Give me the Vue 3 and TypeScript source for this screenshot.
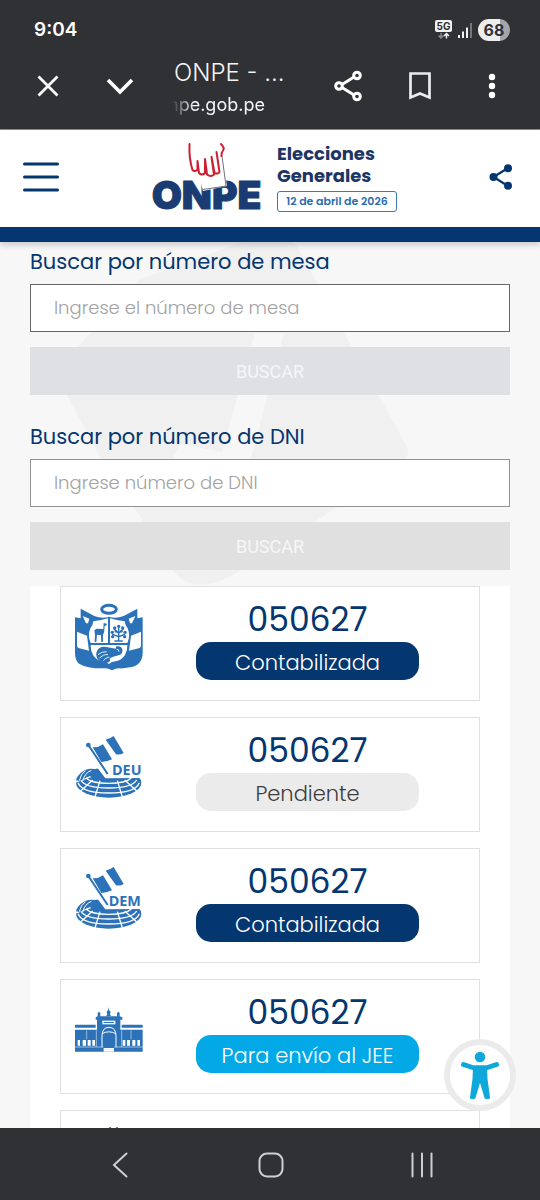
<script setup lang="ts">
import { ref } from 'vue'

type IconName = 'escudo' | 'deu' | 'dem' | 'palacio' | 'siguiente'
type Status = 'done' | 'pending' | 'jee'

interface Acta {
  icon: IconName
  numero?: string
  label?: string
  status?: Status
}

const mesa = ref('')
const dni = ref('')

const actas: Acta[] = [
  { icon: 'escudo', numero: '050627', label: 'Contabilizada', status: 'done' },
  { icon: 'deu', numero: '050627', label: 'Pendiente', status: 'pending' },
  { icon: 'dem', numero: '050627', label: 'Contabilizada', status: 'done' },
  { icon: 'palacio', numero: '050627', label: 'Para envío al JEE', status: 'jee' },
  { icon: 'siguiente' },
]
</script>

<template>
  <div class="phone">
    <div class="status">
      <span class="time">9:04</span>
      <div class="indicators">
        <svg width="17" height="20" viewBox="0 0 17 20">
          <rect x="0" y="0" width="17" height="12" rx="2" fill="#f2f2f3" />
          <text x="8.5" y="9.5" class="net" text-anchor="middle">5G</text>
          <path d="M6 13v5M3.500 15.500L6 18l2.500-2.500" stroke="#8b8b8e" stroke-width="1.500" fill="none" />
          <path d="M11.500 18.500v-5M9 16l2.500-2.500L14 16" stroke="#f2f2f3" stroke-width="1.500" fill="none" />
        </svg>
        <svg width="14" height="15" viewBox="0 0 14 15">
          <path d="M1 12v3M5 8.500V15M9 4.500V15" stroke="#f2f2f3" stroke-width="2" />
          <path d="M13 0v15" stroke="#77777a" stroke-width="2" />
        </svg>
        <span class="battery">68</span>
      </div>
    </div>

    <div class="toolbar">
      <button class="tool" aria-label="Cerrar">
        <svg width="22" height="22" viewBox="0 0 22 22"><path d="M1.500 1.500l19 19M20.500 1.500l-19 19" stroke="#fff" stroke-width="2.800" /></svg>
      </button>
      <button class="tool" aria-label="Minimizar">
        <svg width="28" height="18" viewBox="0 0 28 18"><path d="M2 3l12 12L26 3" stroke="#fff" stroke-width="3.600" fill="none" /></svg>
      </button>
      <div class="page">
        <div class="title">ONPE - ...</div>
        <div class="domain">npe.gob.pe</div>
      </div>
      <button class="tool" aria-label="Compartir página">
        <svg width="28" height="32" viewBox="0 0 28 32" fill="none" stroke="#fff" stroke-width="3">
          <path d="M8 14.500L20 7M8 17.500L20 25" />
          <circle cx="5" cy="16" r="3.300" /><circle cx="23" cy="5.500" r="3.300" /><circle cx="23" cy="26.500" r="3.300" />
        </svg>
      </button>
      <button class="tool" aria-label="Guardar">
        <svg width="22" height="28" viewBox="0 0 22 28"><path d="M1.500 1.500h19v24L11 21.500l-9.500 4z" stroke="#ececee" stroke-width="2.700" fill="none" /></svg>
      </button>
      <button class="tool" aria-label="Más opciones">
        <svg width="8" height="26" viewBox="0 0 8 26" fill="#fff"><circle cx="4" cy="4" r="3.200" /><circle cx="4" cy="13" r="3.200" /><circle cx="4" cy="22" r="3.200" /></svg>
      </button>
    </div>

    <header class="site-header">
      <button class="plain" aria-label="Menú">
        <svg width="36" height="30" viewBox="0 0 36 30"><path d="M1.500 2h33M1.500 15h33M1.500 28h33" stroke="#04366f" stroke-width="3" stroke-linecap="round" /></svg>
      </button>
      <a href="#" class="brand">
        <svg class="logo" width="112" height="70" viewBox="0 0 112 70">
          <text x="55.500" y="67" class="onpe" text-anchor="middle">ONPE</text>
          <path d="M47 30L71 12l5 32-24 5z" fill="#fff" />
          <path d="M71 14l4 30-23 3.500" fill="none" stroke="#6c7278" stroke-width="1" />
          <g fill="none" stroke="#cc1f32" stroke-width="2" stroke-linecap="round" stroke-linejoin="round">
            <path d="M38.500 2C38 12 39 20 41.500 28q2 2 5 0V19L48 31q3 3 6 0V17l2 15.500q4 3 7 0L60.500 15l3 16q4 1.500 5-1L65.500 10" />
            <path d="M70 2q4 4 2 6.500T70.500 14" />
          </g>
        </svg>
        <span class="election">
          <strong class="name">
            <span>Elecciones</span>
            <span>Generales</span>
          </strong>
          <span class="date">12 de abril de 2026</span>
        </span>
      </a>
      <button class="plain" aria-label="Compartir">
        <svg width="24" height="26" viewBox="0 0 24 26" fill="#04366f">
          <path d="M4.500 13L19 4M4.500 13L19 22" stroke="#04366f" stroke-width="2.200" />
          <circle cx="4.500" cy="13" r="4" /><circle cx="19" cy="4.300" r="4" /><circle cx="19" cy="21.700" r="4" />
        </svg>
      </button>
    </header>

    <main class="content">
      <svg class="watermark" width="352" height="344" viewBox="60 242 352 344">
        <path d="M242 242h48q5 0 8 6l19 35 27 50 63 114q4 8-5 14l-65 46-96 63q-20 13-34 14-20 3-32-11l-41-66-34-50-38-71q-8-12 6-28l70-78z" fill="#f0f0f0" />
        <path d="M255 333h29l-33 126h-79l9-15 41 8z" fill="#f7f7f7" />
      </svg>

      <form class="search" @submit.prevent>
        <label for="mesa">Buscar por número de mesa</label>
        <input id="mesa" v-model="mesa" class="field strong" type="text" placeholder="Ingrese el número de mesa" />
        <button class="submit cool" type="submit">BUSCAR</button>
      </form>
      <form class="search" @submit.prevent>
        <label for="dni">Buscar por número de DNI</label>
        <input id="dni" v-model="dni" class="field" type="text" placeholder="Ingrese número de DNI" />
        <button class="submit" type="submit">BUSCAR</button>
      </form>

      <section class="results">
        <article v-for="(acta, i) in actas" :key="i" class="card">
          <svg v-if="acta.icon === 'escudo'" class="icon" viewBox="45 54 204 204">
            <ellipse cx="147" cy="73" rx="22" ry="12" fill="none" stroke="#2b72b9" stroke-width="9" />
            <path d="M62 71l41 22q24 9 44 2 20 7 44-2l41-22v29l16-3v107q-1 37-38 43-20 4-32 3-10-1-20 5h-4q-9-6-20-5-52 1-77-14-12-10-12-32V97l17 3z" fill="#2b72b9" />
            <path d="M68 93l20 8-4 14h-6zM226 93l-20 8 4 14h6zM51 140l30 12 6 45-32-8-4-5zM243 140l-30 12-6 45 32-8 4-5z" fill="#fff" />
            <path d="M100 109q24-3 44-9v74H92q-10-22-1-44 8-10 9-21zM194 109q-24-3-44-9v74h52q10-22 1-44-8-10-9-21zM92 180h110q1 17-7 30-10 16-28 19-13 1-20 8-7-7-20-8-18-3-28-19-8-13-7-30z" fill="#fff" />
            <path d="M131 114l9 2v5l-6 2-2 21-3 3v24h-5l-1-20-12-2-2 22h-5l1-22-2-13 7-5 20 1z" fill="#2b72b9" />
            <g stroke="#2b72b9" stroke-width="4" stroke-linecap="round"><path d="M176 168v-43M163 133l13 12 13-12M158 148l18 7 18-7M165 168h22" fill="none" /></g>
            <g fill="#2b72b9">
              <circle cx="176" cy="124" r="5" /><circle cx="164" cy="129" r="5" /><circle cx="188" cy="129" r="5" /><circle cx="157" cy="142" r="5" /><circle cx="195" cy="142" r="5" /><circle cx="158" cy="155" r="5" /><circle cx="194" cy="155" r="5" /><circle cx="168" cy="139" r="4" /><circle cx="184" cy="139" r="4" />
            </g>
            <path d="M110 200q7-17 29-14l28 5 2-7q15-3 18 9 3 14-11 18-19 4-27 10 5 11-11 12-24-1-28-17-3-9 0-16z" fill="#2b72b9" />
            <path d="M114 209q12-10 26-9M118 219q13-12 26-11M130 227q7-10 18-11M170 193q7-1 7 7" fill="none" stroke="#fff" stroke-width="2.500" />
          </svg>

          <svg v-else-if="acta.icon === 'deu' || acta.icon === 'dem'" class="icon" viewBox="45 42 204 204">
            <ellipse cx="146" cy="188" rx="98" ry="45" fill="#2b72b9" />
            <g fill="none" stroke="#fff" stroke-width="4">
              <path d="M54 188q12 31 92 31t92-31M62 180q14 24 84 24t84-24M78 174q16 16 68 16t68-16" />
              <path d="M120 182l-16 52M172 182l16 52M98 180l-42 38M194 180l42 38M92 170l-46 16" />
            </g>
            <path d="M110 140l26 35 113-1v-34z" fill="#fff" />
            <path d="M48 178q12-24 36-31 16-3 30 3l10 13-30 3q-12 2-22 10l-14 8z" fill="#2b72b9" />
            <path d="M94 151q-20 8-26 32M76 152q-14 10-18 30" fill="none" stroke="#fff" stroke-width="3" />
            <path d="M85 75l57 87" stroke="#fff" stroke-width="14" />
            <path d="M85 75l58 87" stroke="#2b72b9" stroke-width="6" />
            <circle cx="85" cy="75" r="7" fill="#2b72b9" />
            <path d="M98 82q18 1 31-9l27 45q-12 7-32 8zM137 59q13-3 24-11l30 51q-9 6-23 4z" fill="#2b72b9" />
            <text :x="acta.icon === 'deu' ? 156 : 146" y="164" class="cham">{{ acta.icon === 'deu' ? 'DEU' : 'DEM' }}</text>
          </svg>

          <svg v-else-if="acta.icon === 'palacio'" class="icon" viewBox="45 48 204 204">
            <g fill="#2b72b9">
              <path d="M145 81l2 10 5 4-2 8 4 6h-16l4-6-2-8 4-5z" />
              <path d="M107 112l6-3v-10l4-4 4 4v10h50v-10l4-4 4 4v10l8 3v7h-80zM111 119h70v31h-70z" />
              <path d="M45 134h62v9H45zM185 134h63v9h-63zM45 149h203v66H45z" />
            </g>
            <g fill="#fff">
              <path d="M127 122h39v11h-39z" />
              <path d="M53 180h7v17h-7zM68 180h10v17H68zM83 180h9v17h-9zM97 180h8v17h-8zM188 180h8v17h-8zM201 180h9v17h-9zM217 180h9v17h-9zM232 180h8v17h-8z" />
              <path d="M131 204h31v11h-31z" />
            </g>
            <path d="M131 126h31v3h-31z" fill="#2b72b9" />
            <path d="M126 202v-34q0-26 21-26t21 26v34M126 161q20-11 42 0" fill="none" stroke="#fff" stroke-width="3" />
            <path d="M80 151v27M213 151v27M109 151v50M185 151v50" fill="none" stroke="#fff" stroke-width="1.500" />
            <path d="M45 201h85M163 201h85M131 208h31" stroke="#d7e5f2" stroke-width="2" />
          </svg>

          <svg v-else class="icon" viewBox="0 0 68 68"><circle cx="35" cy="0" r="1.200" fill="#777" /><circle cx="42" cy="0" r="1.200" fill="#777" /></svg>

          <div v-if="acta.numero" class="info">
            <div class="number">{{ acta.numero }}</div>
            <div class="pill" :class="acta.status">{{ acta.label }}</div>
          </div>
        </article>
      </section>

      <button class="access" aria-label="Accesibilidad">
        <svg width="40" height="50" viewBox="0 0 40 50" fill="#0ea8db" stroke="#0ea8db" stroke-linecap="round" stroke-linejoin="round">
          <circle cx="20" cy="7" r="5.300" stroke="none" />
          <path d="M3.500 14.500L14 18h12l10.500-3.500" stroke-width="5" fill="none" />
          <path d="M14.500 17h11l.5 12 2.500 18.500H26L21 31h-2l-5 16.500h-2.500L14 29z" stroke-width="3" />
        </svg>
      </button>
    </main>

    <nav class="system-nav" aria-label="Sistema">
      <button aria-label="Atrás"><svg width="16" height="26" viewBox="0 0 16 26"><path d="M14.500 1.500L2 13l12.500 11.500" /></svg></button>
      <button aria-label="Inicio"><svg width="26" height="26" viewBox="0 0 26 26"><rect x="1.500" y="1.500" width="23" height="23" rx="7.500" /></svg></button>
      <button aria-label="Recientes"><svg width="24" height="26" viewBox="0 0 24 26"><path d="M2.500 1.500v23M12 1.500v23M21.500 1.500v23" /></svg></button>
    </nav>
  </div>
</template>

<style>
body {
  background: #f7f7f7;
}
</style>

<style scoped>
.phone {
  display: flex;
  flex-direction: column;
  height: 100vh;
  overflow: hidden;
  font-family: Poppins, Inter, "Noto Sans", sans-serif;
  color: #04366f;
  background: #f7f7f7;
}
.phone * {
  box-sizing: border-box;
}
button {
  padding: 0;
  border: 0;
  background: none;
  font-family: inherit;
  cursor: pointer;
}
svg {
  display: block;
  flex: none;
}
.status {
  display: flex;
  flex: none;
  align-items: center;
  justify-content: space-between;
  height: 44px;
  padding: 16px 30px 0 34px;
  background: #303135;
  color: #fff;
  font-family: Inter, sans-serif;
}
.time {
  font-size: 19px;
  font-weight: 600;
  line-height: 24px;
}
.indicators {
  display: flex;
  align-items: center;
  gap: 6px;
}
.net {
  font: 700 10px Inter, sans-serif;
  fill: #303135;
}
.battery {
  width: 32px;
  border-radius: 11px;
  background: linear-gradient(90deg, #ededee 68%, #a5a5a8 68%);
  color: #303135;
  font-size: 16px;
  font-weight: 700;
  line-height: 22px;
  text-align: center;
}
.toolbar {
  display: flex;
  flex: none;
  align-items: center;
  height: 86px;
  padding: 0 12px 1px;
  border-bottom: 1px solid #8d8e90;
  background: #303135;
  color: #f4f4f5;
}
.tool {
  display: flex;
  flex: none;
  align-items: center;
  justify-content: center;
  width: 72px;
  height: 72px;
}
.page {
  flex: 1;
  min-width: 0;
  padding: 6px 0 0 18px;
  font-family: Inter, sans-serif;
}
.title {
  overflow: hidden;
  font-size: 24px;
  font-weight: 300;
  line-height: 32px;
  white-space: nowrap;
}
.domain {
  font-size: 18px;
  line-height: 32px;
  margin-left: -6px;
  white-space: nowrap;
  mask-image: linear-gradient(90deg, transparent 4px, #000 26px);
}
.site-header {
  position: relative;
  z-index: 1;
  display: flex;
  flex: none;
  align-items: center;
  justify-content: space-between;
  height: 112px;
  padding: 0 27px 3px 23px;
  border-bottom: 15px solid #04366f;
  background: #fff;
  box-shadow: 0 3px 6px rgb(0 0 0 / 18%);
}
.brand {
  display: flex;
  align-items: center;
  gap: 14px;
  color: #1d3566;
  text-decoration: none;
}
.logo {
  overflow: visible;
}
.onpe {
  font: 900 39px Inter, sans-serif;
  fill: #1b3c73;
  stroke: #1b3c73;
  stroke-width: 1px;
  stroke-linejoin: round;
}
.election {
  display: flex;
  flex-direction: column;
  gap: 4px;
  width: 120px;
}
.name {
  display: grid;
  font-size: 18px;
  font-weight: 700;
  line-height: 22px;
}
.date {
  border: 1px solid #3b78b4;
  border-radius: 3px;
  color: #2b6cae;
  font-size: 11px;
  font-weight: 600;
  line-height: 19px;
  text-align: center;
  white-space: nowrap;
}
.content {
  position: relative;
  display: flex;
  flex: 1;
  flex-direction: column;
  min-height: 0;
  padding: 8px 30px 0;
  overflow: hidden;
}
.watermark {
  position: absolute;
  top: 0;
  left: 60px;
}
.search {
  position: relative;
  display: flex;
  flex: none;
  flex-direction: column;
  margin-bottom: 30px;
}
.search + .search {
  margin-bottom: 16px;
}
label {
  margin-bottom: 10px;
  font-size: 21px;
  font-weight: 400;
  line-height: 24px;
}
.field {
  width: 100%;
  height: 48px;
  margin-bottom: 15px;
  padding: 0 23px 2px;
  border: 1px solid #929292;
  border-radius: 0;
  background: #fff;
  color: #333;
  font-family: inherit;
  font-size: 18px;
  font-weight: 300;
}
.field.strong {
  border-color: #666;
}
.field::placeholder {
  color: #a2a2a2;
  opacity: 1;
}
.submit {
  height: 48px;
  background: #e0e0e0;
  color: #f6f6f6;
  font-family: Roboto, sans-serif;
  font-size: 18px;
}
.submit.cool {
  background: #dfe0e4;
}
.results {
  position: relative;
  display: flex;
  flex: 1 0 auto;
  flex-direction: column;
  gap: 16px;
  padding: 0 30px;
  background: #fff;
}
.card {
  display: grid;
  grid-template-columns: 68px 1fr;
  column-gap: 53px;
  align-items: start;
  min-height: 115px;
  padding: 13px 60px 20px 14px;
  border: 1px solid #e0e0e0;
}
.icon {
  width: 68px;
  height: 68px;
  margin-top: 3px;
}
.cham {
  font: 700 43px "Open Sans", sans-serif;
  fill: #2b72b9;
  stroke: #fff;
  stroke-width: 8px;
  paint-order: stroke;
}
.info {
  display: grid;
  gap: 2px;
  text-align: center;
}
.number {
  font-size: 33px;
  font-weight: 400;
  line-height: 40px;
}
.pill {
  padding-top: 3px;
  border-radius: 15px;
  font-size: 21px;
  font-weight: 300;
  line-height: 35px;
  white-space: nowrap;
}
.pill.done {
  background: #04366f;
  color: #fff;
}
.pill.pending {
  background: #ebebeb;
  color: #3c3c3c;
}
.pill.jee {
  background: #02a9e6;
  color: #fff;
}
.access {
  position: absolute;
  right: 24px;
  bottom: 17px;
  display: flex;
  align-items: center;
  justify-content: center;
  width: 72px;
  height: 72px;
  border: 6px solid #ebebeb;
  border-radius: 50%;
  background: #fff;
}
.system-nav {
  display: flex;
  flex: none;
  align-items: center;
  justify-content: space-between;
  height: 72px;
  padding: 2px 80px 0 82px;
  background: #303135;
}
.system-nav button {
  display: flex;
  align-items: center;
  justify-content: center;
  width: 76px;
  height: 60px;
}
.system-nav svg {
  fill: none;
  stroke: #cfcfd1;
  stroke-width: 2px;
  stroke-linecap: round;
}
</style>
